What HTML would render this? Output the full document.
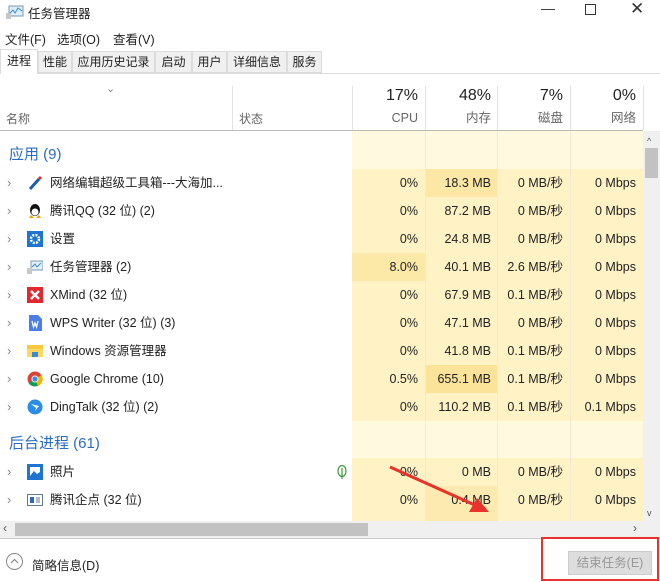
<!DOCTYPE html><html><head><meta charset="utf-8"><style>
*{margin:0;padding:0;box-sizing:border-box}
body{width:660px;height:582px;overflow:hidden;background:#fff;font-family:"Liberation Sans","Noto Sans CJK SC",sans-serif;color:#222;position:relative;font-size:12px}
.a{position:absolute;white-space:nowrap}
.tab{position:absolute;top:51px;height:22px;background:#f0f0f0;border:1px solid #dcdcdc;font-size:12px;line-height:20px;text-align:center}
.vl{position:absolute;width:1px;background:#e2e2e2}
.r{position:absolute;font-size:12.5px;text-align:right}
.row{position:absolute;left:0;width:643px;height:28px}
.row span{position:absolute;top:0;height:28px;line-height:28px;font-size:12.5px;white-space:nowrap}
.row .r{text-align:right;width:66px}
.row .chev{left:7px;color:#888;font-size:13px}
.row .nm{left:50px}
.ic{position:absolute;left:27px;top:6px;width:16px;height:16px}
.c1{left:352px}.c2{left:425px}.c3{left:497px}.c4{left:570px}
</style></head><body>
<svg class="a" style="left:6px;top:5px" width="18" height="14"><rect x="3" y="1" width="14" height="10" fill="#dfeef8" stroke="#7a9ab0"/><polyline points="4,8 7,5 9,8 12,3 16,6" fill="none" stroke="#3a8ad0"/><rect x="0" y="8" width="5" height="6" fill="#c8c8c8"/></svg>
<div class="a" style="left:28px;top:3px;font-size:12.5px">任务管理器</div>
<div class="a" style="left:541px;top:0;font-size:14px;color:#333">—</div>
<div class="a" style="left:585px;top:4px;width:11px;height:11px;border:1px solid #333"></div>
<div class="a" style="left:630px;top:-1px;font-size:17px;color:#333">✕</div>
<div class="a" style="left:5px;top:29px;font-size:12.5px">文件(F)</div>
<div class="a" style="left:57px;top:29px;font-size:12.5px">选项(O)</div>
<div class="a" style="left:113px;top:29px;font-size:12.5px">查看(V)</div>
<div class="a" style="left:0;top:73px;width:660px;height:1px;background:#dcdcdc"></div>
<div class="tab" style="left:0;top:49px;height:25px;width:38px;background:#fff;border-bottom:none;line-height:22px">进程</div>
<div class="tab" style="left:38px;width:34px">性能</div>
<div class="tab" style="left:72px;width:83px">应用历史记录</div>
<div class="tab" style="left:155px;width:37px">启动</div>
<div class="tab" style="left:192px;width:35px">用户</div>
<div class="tab" style="left:227px;width:60px">详细信息</div>
<div class="tab" style="left:287px;width:35px">服务</div>
<div class="a" style="left:106px;top:82px;color:#888;font-size:11px">⌄</div>
<div class="a" style="left:6px;top:110px;color:#666">名称</div>
<div class="a" style="left:239px;top:110px;color:#666">状态</div>
<div class="vl" style="left:232px;top:86px;height:44px"></div>
<div class="vl" style="left:352px;top:86px;height:44px"></div>
<div class="vl" style="left:425px;top:86px;height:44px"></div>
<div class="vl" style="left:497px;top:86px;height:44px"></div>
<div class="vl" style="left:570px;top:86px;height:44px"></div>
<div class="vl" style="left:643px;top:86px;height:44px"></div>
<div class="r" style="left:352px;width:66px;top:87px;font-size:16px">17%</div>
<div class="r" style="left:425px;width:66px;top:87px;font-size:16px">48%</div>
<div class="r" style="left:497px;width:66px;top:87px;font-size:16px">7%</div>
<div class="r" style="left:570px;width:66px;top:87px;font-size:16px">0%</div>
<div class="r" style="left:352px;width:66px;top:110px;color:#666;line-height:16px">CPU</div>
<div class="r" style="left:425px;width:66px;top:110px;color:#666;line-height:16px">内存</div>
<div class="r" style="left:497px;width:66px;top:110px;color:#666;line-height:16px">磁盘</div>
<div class="r" style="left:570px;width:66px;top:110px;color:#666;line-height:16px">网络</div>
<div class="a" style="left:0;top:130px;width:643px;height:1px;background:#bbb"></div>
<div class="a" style="left:352px;top:131px;width:291px;height:390px;background:#fff9df"></div>
<div class="a" style="left:352px;top:169px;width:291px;height:252px;background:#fff3c6"></div>
<div class="a" style="left:352px;top:458px;width:291px;height:63px;background:#fff3c6"></div>
<div class="a" style="left:425px;top:169px;width:72px;height:28px;background:#fce8a4"></div>
<div class="a" style="left:425px;top:365px;width:72px;height:28px;background:#fce39a"></div>
<div class="a" style="left:352px;top:253px;width:73px;height:28px;background:#fce9a8"></div>
<div class="a" style="left:425px;top:486px;width:72px;height:35px;background:#fdeab0"></div>
<div class="vl" style="left:425px;top:131px;height:390px;background:#f3ead0"></div>
<div class="vl" style="left:497px;top:131px;height:390px;background:#f3ead0"></div>
<div class="vl" style="left:570px;top:131px;height:390px;background:#f3ead0"></div>
<div class="a" style="left:9px;top:143px;font-size:15px;color:#2b6cc4">应用 (9)</div>
<div class="a" style="left:9px;top:432px;font-size:15px;color:#2b6cc4">后台进程 (61)</div>
<div style="position:absolute;left:0;top:169px">
<div class="row" style="top:0"><span class="chev">›</span><svg class="ic" viewBox="0 0 16 16"><path d="M3 14 L12 4" stroke="#1a5db0" stroke-width="3"/><path d="M12 4 L14 2" stroke="#e03030" stroke-width="3"/></svg><span class="nm">网络编辑超级工具箱---大海加...</span>
<span class="r c1">0%</span><span class="r c2">18.3 MB</span><span class="r c3">0 MB/秒</span><span class="r c4">0 Mbps</span></div>
<div class="row" style="top:28px"><span class="chev">›</span><svg class="ic" viewBox="0 0 16 16"><ellipse cx="8" cy="7" rx="5" ry="6" fill="#111"/><ellipse cx="8" cy="9" rx="3.5" ry="3.5" fill="#fff"/><path d="M4 12 L2 15 H7 Z M12 12 L14 15 H9Z" fill="#f5a000"/></svg><span class="nm">腾讯QQ (32 位) (2)</span>
<span class="r c1">0%</span><span class="r c2">87.2 MB</span><span class="r c3">0 MB/秒</span><span class="r c4">0 Mbps</span></div>
<div class="row" style="top:56px"><span class="chev">›</span><svg class="ic" viewBox="0 0 16 16"><rect width="16" height="16" fill="#1e74d0"/><circle cx="8" cy="8" r="4" fill="none" stroke="#fff" stroke-width="2.5" stroke-dasharray="2 1.2"/></svg><span class="nm">设置</span>
<span class="r c1">0%</span><span class="r c2">24.8 MB</span><span class="r c3">0 MB/秒</span><span class="r c4">0 Mbps</span></div>
<div class="row" style="top:84px"><span class="chev">›</span><svg class="ic" viewBox="0 0 16 16"><rect x="4" y="2" width="12" height="9" fill="#e4f0f8" stroke="#7a9ab0"/><polyline points="5,8 8,5 10,8 14,4" fill="none" stroke="#3a8ad0"/><rect x="0" y="9" width="5" height="6" fill="#c8c8c8"/></svg><span class="nm">任务管理器 (2)</span>
<span class="r c1">8.0%</span><span class="r c2">40.1 MB</span><span class="r c3">2.6 MB/秒</span><span class="r c4">0 Mbps</span></div>
<div class="row" style="top:112px"><span class="chev">›</span><svg class="ic" viewBox="0 0 16 16"><rect width="16" height="16" fill="#e0282e"/><path d="M4 4 L12 12 M12 4 L4 12" stroke="#fff" stroke-width="2.5"/></svg><span class="nm">XMind (32 位)</span>
<span class="r c1">0%</span><span class="r c2">67.9 MB</span><span class="r c3">0.1 MB/秒</span><span class="r c4">0 Mbps</span></div>
<div class="row" style="top:140px"><span class="chev">›</span><svg class="ic" viewBox="0 0 16 16"><path d="M2 0 H11 L15 4 V16 H2Z" fill="#4a7fe8"/><path d="M5 6 L6.5 12 L8 8 L9.5 12 L11 6" stroke="#fff" fill="none" stroke-width="1.3"/></svg><span class="nm">WPS Writer (32 位) (3)</span>
<span class="r c1">0%</span><span class="r c2">47.1 MB</span><span class="r c3">0 MB/秒</span><span class="r c4">0 Mbps</span></div>
<div class="row" style="top:168px"><span class="chev">›</span><svg class="ic" viewBox="0 0 16 16"><rect x="0" y="2" width="16" height="12" fill="#f8c840"/><rect x="0" y="6" width="16" height="8" fill="#ffd860"/><rect x="5" y="9" width="6" height="5" fill="#3a8ad0"/></svg><span class="nm">Windows 资源管理器</span>
<span class="r c1">0%</span><span class="r c2">41.8 MB</span><span class="r c3">0.1 MB/秒</span><span class="r c4">0 Mbps</span></div>
<div class="row" style="top:196px"><span class="chev">›</span><svg class="ic" viewBox="0 0 16 16"><circle cx="8" cy="8" r="7.5" fill="#db4437"/><path d="M8 8 L1.5 12 A7.5 7.5 0 0 0 14 12Z" fill="#0f9d58"/><path d="M8 8 L14.5 4 A7.5 7.5 0 0 1 11 15Z" fill="#f4b400"/><circle cx="8" cy="8" r="3.5" fill="#fff"/><circle cx="8" cy="8" r="2.6" fill="#4285f4"/></svg><span class="nm">Google Chrome (10)</span>
<span class="r c1">0.5%</span><span class="r c2">655.1 MB</span><span class="r c3">0.1 MB/秒</span><span class="r c4">0 Mbps</span></div>
<div class="row" style="top:224px"><span class="chev">›</span><svg class="ic" viewBox="0 0 16 16"><circle cx="8" cy="8" r="7.5" fill="#2a8ee8"/><path d="M4 5 L12 7 L8 12 L9 9Z" fill="#fff"/></svg><span class="nm">DingTalk (32 位) (2)</span>
<span class="r c1">0%</span><span class="r c2">110.2 MB</span><span class="r c3">0.1 MB/秒</span><span class="r c4">0.1 Mbps</span></div>
<div class="row" style="top:289px"><span class="chev">›</span><svg class="ic" viewBox="0 0 16 16"><rect width="16" height="16" fill="#1e74d0"/><rect x="3" y="3" width="10" height="9" fill="#fff"/><path d="M3 12 L7 7 L10 10 L13 8 V12Z" fill="#1e74d0"/></svg><span class="nm">照片</span>
<svg style="position:absolute;left:337px;top:7px" width="10" height="15" viewBox="0 0 10 15"><ellipse cx="5" cy="6" rx="4" ry="5.5" fill="none" stroke="#3a9a3a" stroke-width="1.2"/><path d="M5 3 V14" stroke="#3a9a3a" stroke-width="1.2"/></svg>
<span class="r c1">0%</span><span class="r c2">0 MB</span><span class="r c3">0 MB/秒</span><span class="r c4">0 Mbps</span></div>
<div class="row" style="top:317px"><span class="chev">›</span><svg class="ic" viewBox="0 0 16 16"><rect x="0.5" y="2.5" width="15" height="11" fill="#fff" stroke="#607890"/><rect x="3" y="5" width="4" height="6" fill="#2a6ab0"/><path d="M9 6H13M9 8H13M9 10H13" stroke="#607890"/></svg><span class="nm">腾讯企点 (32 位)</span>
<span class="r c1">0%</span><span class="r c2">0.4 MB</span><span class="r c3">0 MB/秒</span><span class="r c4">0 Mbps</span></div>
</div>
<svg class="a" style="left:385px;top:462px" width="110" height="56"><line x1="5" y1="5" x2="92" y2="44" stroke="#e8322a" stroke-width="3"/><polygon points="104,50 84,50 92,36" fill="#e8322a"/></svg>
<div class="a" style="left:643px;top:131px;width:17px;height:390px;background:#f0f0f0"></div>
<div class="a" style="left:647px;top:136px;color:#555;font-size:9px">^</div>
<div class="a" style="left:645px;top:148px;width:13px;height:30px;background:#c2c2c2"></div>
<div class="a" style="left:647px;top:508px;color:#555;font-size:9px">v</div>
<div class="a" style="left:0;top:521px;width:660px;height:17px;background:#f0f0f0"></div>
<div class="a" style="left:3px;top:521px;color:#555;font-size:12px">‹</div>
<div class="a" style="left:15px;top:523px;width:353px;height:13px;background:#c2c2c2"></div>
<div class="a" style="left:633px;top:521px;color:#555;font-size:12px">›</div>
<div class="a" style="left:0;top:538px;width:660px;height:1px;background:#ccc"></div>
<div class="a" style="left:6px;top:553px;width:17px;height:17px;border:1px solid #888;border-radius:50%"></div>
<svg class="a" style="left:6px;top:553px" width="17" height="17"><polyline points="5,10 8.5,6.5 12,10" fill="none" stroke="#888" stroke-width="1.2"/></svg>
<div class="a" style="left:32px;top:555px;font-size:12.5px">简略信息(D)</div>
<div class="a" style="left:568px;top:551px;width:84px;height:24px;background:#ddd;border:1px solid #ccc;color:#999;font-size:12.5px;text-align:center;line-height:22px">结束任务(E)</div>
<div class="a" style="left:541px;top:537px;width:118px;height:44px;border:2px solid #e8322a"></div>
</body></html>
